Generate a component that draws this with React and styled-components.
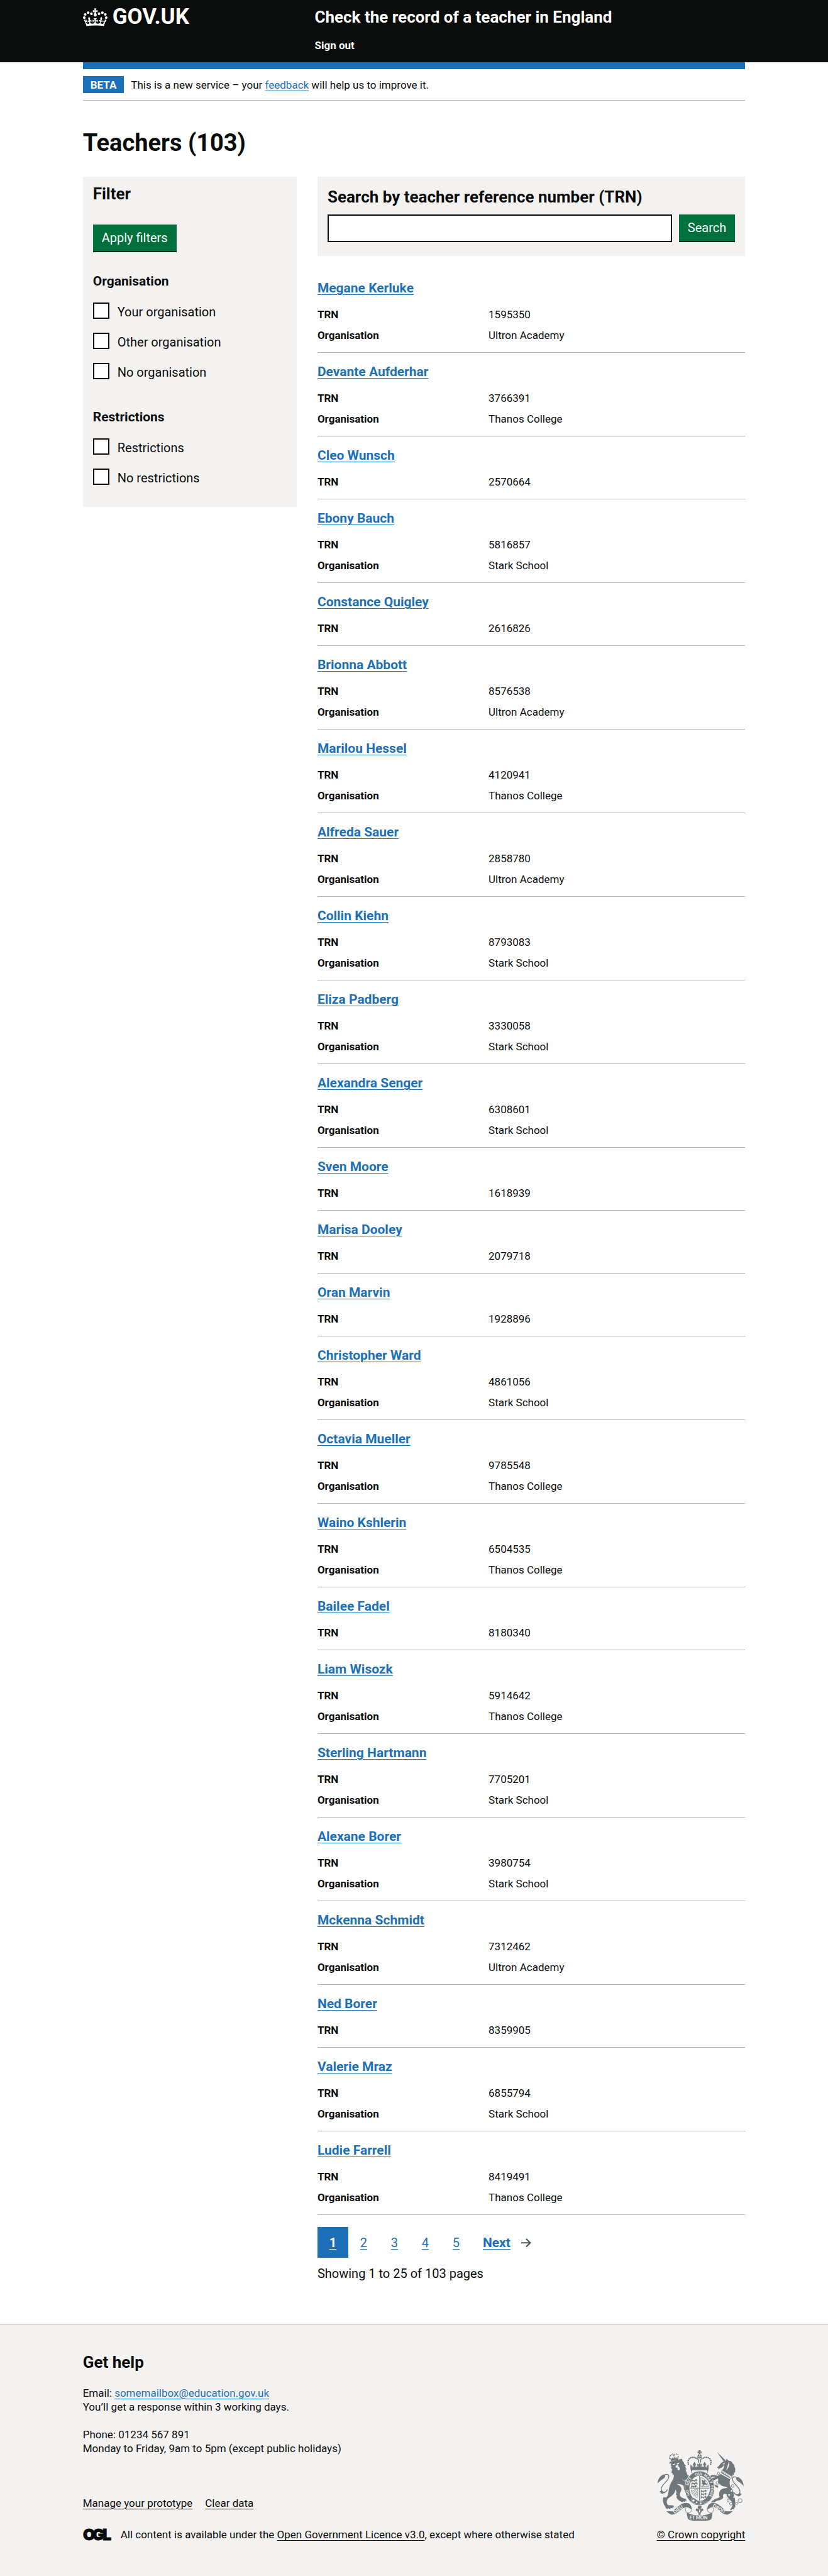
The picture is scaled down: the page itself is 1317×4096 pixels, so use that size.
import React from "react";
import styled, { createGlobalStyle, css } from "styled-components";

const c = {
  ink: "#0b0c0c",
  blue: "#1d70b8",
  green: "#00703c",
  greenDark: "#002d18",
  grey: "#f3f2f1",
  line: "#b1b4b6",
  muted: "#505a5f",
  crest: "#6f777b",
  white: "#ffffff",
};

const text = {
  xl: css`font-size: 38px; line-height: 44px;`,
  l: css`font-size: 26px; line-height: 32px;`,
  m: css`font-size: 21px; line-height: 28px;`,
  body: css`font-size: 20px; line-height: 28px;`,
  s: css`font-size: 17px; line-height: 22px;`,
};

const GlobalStyle = createGlobalStyle`
  *, *::before, *::after { box-sizing: border-box; }
  body {
    margin: 0;
    background: ${c.white};
    color: ${c.ink};
    font-family: Roboto, "Liberation Sans", sans-serif;
  }
  h1, h2, h3, p, ul, dl, dd, fieldset { margin: 0; padding: 0; }
  ul { list-style: none; }
  button, input { font: inherit; }
`;

const Container = styled.div`
  width: 80%;
  max-width: 1054px;
  margin: 0 auto;
`;

const Link = styled.a`
  color: ${(p) => (p.$ink ? c.ink : c.blue)};
  text-decoration: underline;
  text-decoration-thickness: 1px;
  text-underline-offset: 3px;
`;

/* Header */

const Header = styled.header`
  background: ${c.ink};
  color: ${c.white};
`;

const HeaderInner = styled(Container)`
  display: grid;
  grid-template-columns: 35% 1fr;
  padding: 11px 0 16px;
`;

const Logo = styled.a`
  display: flex;
  align-items: center;
  gap: 8px;
  height: 32px;
  color: inherit;
  text-decoration: none;
  font-size: 35px;
  line-height: 32px;
  font-weight: 700;
`;

const ServiceName = styled.a`
  display: block;
  margin-bottom: 18px;
  color: inherit;
  text-decoration: none;
  font-weight: 700;
  ${text.l}
`;

const HeaderLink = styled.a`
  display: inline-block;
  color: inherit;
  text-decoration: none;
  font-weight: 700;
  ${text.s}
`;

const HeaderNav = styled.nav`
  display: flex;
`;

/* Phase banner */

const PhaseBanner = styled.div`
  display: flex;
  align-items: center;
  gap: 11px;
  padding: 11px 0;
  border-top: 11px solid ${c.blue};
  border-bottom: 1px solid ${c.line};
  ${text.s}
`;

const Tag = styled.strong`
  padding: 3px 12px 2px;
  background: ${c.blue};
  color: ${c.white};
  text-transform: uppercase;
`;

/* Page */

const Main = styled.main`
  padding: 45px 0 66px;
`;

const PageTitle = styled.h1`
  margin-bottom: 32px;
  ${text.xl}
`;

const Columns = styled.div`
  display: grid;
  grid-template-columns: 1fr 2fr;
  gap: 33px;
  align-items: start;
`;

const Button = styled.button`
  height: 42px;
  padding: 0 14px;
  border: 0;
  background: ${c.green};
  box-shadow: 0 2px 0 ${c.greenDark};
  color: ${c.white};
  cursor: pointer;
  ${text.body}
`;

/* Filter panel */

const FilterPanel = styled.form`
  padding: 11px 16px 31px;
  background: ${c.grey};
`;

const FilterTitle = styled.h2`
  margin-bottom: 33px;
  ${text.l}
`;

const Fieldset = styled.fieldset`
  min-width: 0;
  margin-top: ${(p) => (p.$first ? "34px" : "42px")};
  border: 0;
`;

const Legend = styled.legend`
  margin-bottom: 20px;
  padding: 0;
  font-weight: 700;
  ${text.m}
`;

const Options = styled.div`
  display: grid;
  gap: 18px;
`;

const Option = styled.div`
  display: flex;
  gap: 13px;
`;

const Checkbox = styled.input`
  appearance: none;
  flex: none;
  width: 26px;
  height: 26px;
  margin: 0;
  border: 2px solid ${c.ink};
  background: ${c.white};
  &:checked { box-shadow: inset 0 0 0 4px ${c.white}; background: ${c.ink}; }
`;

const OptionLabel = styled.label`
  font-size: 20px;
  line-height: 30px;
`;

/* Search panel */

const SearchPanel = styled.form`
  margin-bottom: 21px;
  padding: 16px 16px 22px;
  background: ${c.grey};
`;

const SearchLabel = styled.label`
  display: block;
  margin-bottom: 12px;
  font-weight: 700;
  ${text.l}
`;

const SearchRow = styled.div`
  display: flex;
  gap: 11px;
`;

const SearchInput = styled.input`
  flex: 1;
  min-width: 0;
  height: 44px;
  padding: 0 6px;
  border: 2px solid ${c.ink};
  border-radius: 0;
  background: ${c.white};
  ${text.body}
`;

/* Records */

const Record = styled.li`
  padding: 16px 0;
  border-bottom: 1px solid ${c.line};
`;

const RecordName = styled.h2`
  margin-bottom: 17px;
  ${text.m}
`;

const Summary = styled.dl`
  display: grid;
  gap: 11px;
  ${text.s}
`;

const SummaryRow = styled.div`
  display: grid;
  grid-template-columns: 2fr 3fr;
  dt { font-weight: 700; }
`;

/* Pagination */

const Pagination = styled.nav`
  display: flex;
  align-items: center;
  margin: 19px 0 11px;
`;

const PageList = styled.ul`
  display: flex;
`;

const PageLink = styled(Link)`
  display: flex;
  align-items: center;
  justify-content: center;
  width: 49px;
  height: 49px;
  ${text.body}
  ${(p) => p.$current && css`
    background: ${c.blue};
    color: ${c.white};
    font-weight: 700;
  `}
`;

const NextLink = styled.a`
  display: flex;
  align-items: center;
  gap: 17px;
  margin-left: 18px;
  color: ${c.blue};
  font-weight: 700;
  text-decoration: none;
  ${text.m}
  span {
    text-decoration: underline;
    text-decoration-thickness: 1px;
    text-underline-offset: 3px;
  }
`;

const ResultCount = styled.p`
  ${text.body}
`;

/* Footer */

const Footer = styled.footer`
  border-top: 1px solid ${c.line};
  background: ${c.grey};
  ${text.s}
`;

const FooterInner = styled(Container)`
  display: flex;
  align-items: flex-end;
  justify-content: space-between;
  gap: 33px;
  padding: 44px 0 55px;
`;

const FooterTitle = styled.h2`
  margin-bottom: 22px;
  ${text.l}
`;

const Contact = styled.p`
  margin-bottom: ${(p) => (p.$last ? "65px" : "22px")};
`;

const FooterLinks = styled.ul`
  display: flex;
  gap: 20px;
  margin-bottom: 28px;
`;

const Licence = styled.div`
  display: flex;
  align-items: center;
  gap: 14px;
`;

const Ogl = styled.svg`
  flex: none;
  margin: -5px 0;
  overflow: visible;
`;

const Copyright = styled.a`
  display: flex;
  flex: none;
  flex-direction: column;
  align-items: center;
  gap: 11px;
  color: ${c.ink};
  text-decoration: underline;
  text-decoration-thickness: 1px;
  text-underline-offset: 3px;
`;

function Crown() {
  return (
    <svg width="39" height="29" viewBox="0 0 132 97" fill="currentColor" aria-hidden="true">
      <path d="M25 30.2c3.5 1.5 7.7-.2 9.1-3.7 1.5-3.6-.2-7.8-3.9-9.2-3.6-1.4-7.6.3-9.1 3.9-1.4 3.5.3 7.5 3.9 9zM9 39.5c3.6 1.5 7.8-.2 9.2-3.7 1.5-3.6-.2-7.8-3.9-9.1-3.6-1.5-7.6.2-9.1 3.8-1.4 3.5.3 7.5 3.8 9zM4.4 57.2c3.5 1.5 7.7-.2 9.1-3.8 1.5-3.6-.2-7.7-3.9-9.1-3.5-1.5-7.6.3-9.1 3.8-1.4 3.5.3 7.6 3.9 9.1zm38.3-21.4c3.5 1.5 7.7-.2 9.1-3.8 1.5-3.6-.2-7.7-3.9-9.1-3.6-1.5-7.6.3-9.1 3.8-1.3 3.6.4 7.7 3.9 9.1zm64.4-5.6c-3.6 1.5-7.8-.2-9.1-3.7-1.5-3.6.2-7.8 3.8-9.2 3.6-1.4 7.7.3 9.2 3.9 1.3 3.5-.4 7.5-3.9 9zm15.9 9.3c-3.6 1.5-7.7-.2-9.1-3.7-1.5-3.6.2-7.8 3.7-9.1 3.6-1.5 7.7.2 9.2 3.8 1.5 3.5-.3 7.5-3.8 9zm4.7 17.7c-3.6 1.5-7.8-.2-9.2-3.8-1.5-3.6.2-7.7 3.9-9.1 3.6-1.5 7.7.3 9.2 3.8 1.3 3.5-.4 7.6-3.9 9.1zM89.3 35.8c-3.6 1.5-7.8-.2-9.2-3.8-1.4-3.6.2-7.7 3.9-9.1 3.6-1.5 7.7.3 9.2 3.8 1.4 3.6-.3 7.7-3.9 9.1zM69.7 17.7l8.9 4.7V9.3l-8.9 2.8c-.2-.3-.5-.6-.9-.9L72.4 0H59.6l3.5 11.2c-.3.3-.6.5-.9.9l-8.8-2.8v13.1l8.8-4.7c.3.3.6.7.9.9l-5 15.4v.1c-.2.8-.4 1.6-.4 2.4 0 4.1 3.1 7.5 7 8.1h.2c.3 0 .7.1 1 .1.4 0 .7 0 1-.1h.2c4-.6 7.1-4.1 7.1-8.1 0-.8-.1-1.7-.4-2.4V34l-5.1-15.4c.4-.2.7-.6 1-.9zM66 92.8c16.9 0 32.8 1.1 47.1 3.2 4-16.9 8.9-26.7 14-33.5l-9.6-3.4c1 4.9 1.1 7.2 0 10.2-1.5-1.4-3-4.3-4.2-8.7L108.6 76c2.8-2 5-3.2 7.5-3.3-4.4 9.4-10 11.9-13.6 11.2-4.3-.8-6.3-4.6-5.6-7.9 1-4.7 5.7-5.9 8-.5 4.3-8.7-3-11.4-7.6-8.8 7.1-7.2 7.9-13.5 2.1-21.1-8 6.1-8.1 12.3-4.5 20.8-4.7-5.4-12.1-2.5-9.5 6.2 3.4-5.2 7.9-2 7.2 3.1-.6 4.3-6.4 7.8-13.5 7.2-10.3-.9-10.9-8-11.2-13.8 2.5-.5 7.1 1.8 11 7.3L80.2 60c-4.1 4.4-8 5.3-12.3 5.4 1.4-4.4 8-11.6 8-11.6H55.5s6.4 7.2 7.9 11.6c-4.2-.1-8-1-12.3-5.4l1.4 16.4c3.9-5.5 8.5-7.7 10.9-7.3-.3 5.8-.9 12.8-11.1 13.8-7.2.6-12.9-2.9-13.5-7.2-.7-5 3.8-8.3 7.1-3.1 2.7-8.7-4.6-11.6-9.4-6.2 3.7-8.5 3.6-14.7-4.6-20.8-5.8 7.6-5 13.9 2.2 21.1-4.7-2.6-11.9.1-7.7 8.8 2.3-5.5 7.1-4.2 8.1.5.7 3.3-1.3 7.1-5.7 7.9-3.5.7-9-1.8-13.5-11.2 2.5.1 4.7 1.3 7.5 3.3l-4.7-15.4c-1.2 4.4-2.7 7.2-4.3 8.7-1.1-3-.9-5.3 0-10.2l-9.5 3.4c5 6.9 9.9 16.7 14 33.5 14.8-2.1 30.8-3.2 47.7-3.2z" />
    </svg>
  );
}

function OglMark() {
  return (
    <Ogl width="46" height="32" viewBox="0 0 46 32" role="img" aria-label="Open Government Licence">
      <g fill={c.ink} stroke={c.ink} strokeWidth="1" fontFamily="Inter, Roboto, sans-serif" fontWeight="900" fontSize="25">
        <text x="0" y="25">O</text>
        <text x="15" y="25">G</text>
        <text x="31" y="25">L</text>
      </g>
    </Ogl>
  );
}

function ArrowRight() {
  return (
    <svg width="16" height="14" viewBox="0 0 15 13" fill={c.muted} aria-hidden="true">
      <path d="m8.107-.0078-1.4136 1.414 4.2926 4.293H0v2h10.9864l-4.2926 4.293 1.4136 1.414 6.7072-6.707z" />
    </svg>
  );
}

const archBeads = [
  [340, 150], [337, 134], [339, 118], [347, 104], [360, 95], [375, 91], [390, 92], [404, 98], [417, 104],
];

const mirror = (x) => 874 - x;

function HalfCrown() {
  return (
    <g>
      {archBeads.map(([x, y]) => <circle key={`${x}-${y}`} cx={x} cy={y} r="6.5" />)}
      <path d="M354 160l12 22 8-18 3 18 8-10-2-14-6 2 4-10 12-20 11 20 5 9-8-1-2 14 9 10 6-16 8 18 4-18 12 2v42h-76z" />
      <path d="M366 180l-12-28 20 16zM424 108h9v30h-9z" />
    </g>
  );
}

function HalfRibbon() {
  return (
    <g>
      <path d="M148 560l54 2c40-30 70-74 120-74 34 0 50 36 48 60-18-14-28-24-50-22-50 6-72 66-126 64-20-4-30-18-46-30z" />
      <path d="M318 534c-10 16-2 30 14 38M370 548c-4 16-16 26-34 26" fill="none" stroke={c.crest} strokeWidth="5" />
    </g>
  );
}

function SupporterTail() {
  return (
    <g>
      <path d="M158 372c-20 36-56 30-54-8 4-40 66-66 66-106 0-22-26-24-46-10" fill="none" stroke={c.crest} strokeWidth="7" />
      <path d="M72 320c2-30 12-60 44-76 14-6 26 4 22 14-8 20-24 22-34 32-12 10-20 16-32 30zM90 384c10 6 14-2 16-12 4 14 14 20 30 22l-6 12-10-3-2 10-10-8-8 4 1-10c-6-2-10-8-11-15z" />
    </g>
  );
}

function LionPassant({ x, y }) {
  return (
    <path
      transform={`translate(${x} ${y})`}
      d="M0 6l8-6 6 6h18l8-8 8 2-4 4 12 2-4 6-8-2 2 9-8-1-2-6-10 2 6 7-9 1-5-8-8 2-6 6-6-3 6-7z"
    />
  );
}

function RoyalArms() {
  return (
    <svg width="137" height="112" viewBox="72 30 750 612" fill={c.crest} aria-hidden="true">
      <defs>
        <path id="garter" d="M438 479A98 117 0 0 1 438 245A98 117 0 0 1 438 479" />
      </defs>

      {/* Imperial crown */}
      <path d="M428 30h19l-4 12 11-5v19l-11-4 4 12h-19l4-12-12 4V37l12 5z" />
      <path d="M420 80c0-10 6-16 15-17v17zM440 63c9 1 15 7 15 17h-15zM416 84h42c0 12-9 18-21 18s-21-6-21-18z" />
      <path d="M418 146l14 8 0-12h11l0 12 14-8v24l-14-8 2 12h-17l2-12-12 8z" />
      <HalfCrown />
      <g transform="translate(874 0) scale(-1 1)"><HalfCrown /></g>
      <path d="M358 182c50-12 108-12 158 0l-8 24c-46-10-96-10-142 0z" />
      <path d="M372 202h130l8 14c-2 6-6 10-10 14H374c-4-4-8-8-10-14z" fill={c.grey} stroke={c.crest} strokeWidth="5" />

      {/* Lion */}
      <path d="M172 146l8-16 104-26 4 18 16 18-4 4 20 22-10 2 14 30-10 0 14 36 6 16 12-4-14 26-6 10c-8 8-14 10-22 8l28 28c16 18 14 34 20 66 4 14-2 16-8 4l-4 4-8-10-6 6-8-16-12 8c-10-12-2-30-10-42-12-10-30-16-58-14 26 12 42 24 42 46-4 24-22 38-12 58 14 20 34 20 50 26l8 20-10-6-6 14-10-8-10 8c-22-8-42-18-54-42l4-16-10-8c8-12 8-26-2-44-12 60-62 62-74 92-6 22 0 40 16 44h28c16 2 18 12 14 20l-10-4 2 12-18-4-4 10-18-8-8 8-14-10-4-14c-16-20-24-52-16-80l26 4c26-28 16-86 38-124 16-28 28-40 28-78l-10 8-4-22-8 2 8-40-12 6 6-30-8 2 4-22z" />
      <path d="M202 152l22-6 0 8-14 5zM238 144l24-6-6 12-14 4zM226 172l10-12 18-4-4 12 14 14 0 18-10 6-10-10 2-14-14 0z" fill={c.grey} />
      <path d="M284 280l56 50" stroke={c.grey} strokeWidth="3" />
      <g>
        <path d="M190 124l-12-32 16 14 6-14 8 14 8-20 8 18 10-14 6 14 12-16-2 26z" />
        {[[178, 88], [182, 76], [192, 70], [204, 62], [214, 78], [220, 66], [236, 62], [248, 68], [252, 82], [176, 102], [250, 94], [208, 70]].map(([x, y]) => (
          <circle key={`${x}-${y}`} cx={x} cy={y} r="5" />
        ))}
      </g>
      <SupporterTail />

      {/* Unicorn */}
      <path d="M588 45l76 72-14 14z" />
      <path d="M602 170c14-14 20-34 50-46l16-4 2-17 20 18c20 0 32 10 34 24l18 14-2 10 8 22-2 34-8-4-4 28-10-6-2 16-88-56c14-16 22-26 16-46-6 16-22 30-38 30l-8 14-2-14-12-6 8-6-12-2z" />
      <path d="M640 148l16-6-4 10zM692 132c6 22-2 50-24 72" fill={c.grey} stroke={c.grey} strokeWidth="3" />
      <path d="M632 204l88 56-10 16-86-50z" fill={c.grey} stroke={c.crest} strokeWidth="4" />
      <path d="M630 226l4-14 8 14 8-6 4 18 10-8 4 16 10-6 6 16 8-8 4 16 8-4-2 10z" />
      <path d="M620 236l84 46c-8 30-8 54 16 84 20 30 12 64 26 86l2 70c-8 6-10 14-8 20l-22 0-4 10-10-2c4-18 22-26 20-54-2-30-48-46-52-84-22-8-38 4-28 26-6 26-40 24-62 34l-12 10-34 2 14-16 8-2 10-10 44-16c-10-38-2-66 30-76 22-4 44-6 34-14-16-4-44-2-64-26-14-16-16-34-12-46-24-14-44-24-56-14l-6 8-8-16c14-20 36-12 64-2z" />
      <path d="M604 272l-46 22 4 32 38 14-4 16-18-6-20-30-22-24 6-24 60-12z" />
      <g transform="translate(893 22) scale(-1 1)"><SupporterTail /></g>

      {/* Chain */}
      <g fill="none" stroke={c.crest} strokeWidth="5">
        <ellipse cx="602" cy="231" rx="9" ry="12" />
        <ellipse cx="584" cy="258" rx="7" ry="11" />
        <ellipse cx="591" cy="314" rx="10" ry="13" />
        <circle cx="726" cy="340" r="12" />
        <ellipse cx="685" cy="467" rx="9" ry="13" />
        <circle cx="710" cy="495" r="12" />
        <ellipse cx="760" cy="492" rx="12" ry="9" />
        <circle cx="790" cy="469" r="18" />
      </g>
      <g fill={c.grey}>
        <circle cx="716" cy="384" r="8" />
        <circle cx="695" cy="419" r="8" />
        <circle cx="738" cy="438" r="7" />
      </g>

      {/* Garter and shield */}
      <ellipse cx="438" cy="361" rx="130" ry="151" fill={c.grey} />
      <ellipse cx="438" cy="361" rx="108" ry="129" fill={c.grey} stroke={c.crest} strokeWidth="37" />
      <g fill={c.grey} fontFamily="Lato, Roboto, sans-serif" fontWeight="900" fontSize="31">
        <text><textPath href="#garter" startOffset="108">HO</textPath></text>
        <text><textPath href="#garter" startOffset="192">SOIT</textPath></text>
        <text><textPath href="#garter" startOffset="300">QUI</textPath></text>
        <text><textPath href="#garter" startOffset="374">MAL</textPath></text>
        <text><textPath href="#garter" startOffset="446">Y</textPath></text>
        <text><textPath href="#garter" startOffset="482">PENSE</textPath></text>
      </g>
      <path d="M434 254h6v216h-6zM352 356h172v6H352z" />
      <LionPassant x={366} y={282} />
      <LionPassant x={366} y={308} />
      <LionPassant x={362} y={334} />
      <LionPassant x={447} y={376} />
      <LionPassant x={447} y={402} />
      <LionPassant x={447} y={428} />
      <path d="M448 268c34 6 60 34 66 78h-66z" fill="none" stroke={c.crest} strokeWidth="4" />
      <path d="M456 290l10-6 4 12 16-8 4 12-8 8 20 14-2 16-14-12-12 12-14 4 8-14-12-8 6-8z" />
      <path d="M364 376c26 10 40-14 58-6v64c-6 12-20 6-24-2-20-16-30-32-34-56zM376 386l30 44M388 382l24 40M402 376l14 32" fill="none" stroke={c.crest} strokeWidth="4" />
      <path d="M366 452c6-12 26-10 34 0 30 26 80 34 116 24-26 22-84 36-130 12l-8 2-12-12 4-10z" stroke={c.grey} strokeWidth="3" />
      <g fill={c.grey}>
        <circle cx="384" cy="468" r="10" />
        <circle cx="412" cy="482" r="7" />
        <circle cx="447" cy="491" r="7" />
      </g>

      {/* Motto */}
      <HalfRibbon />
      <g transform={`translate(${mirror(0)} 0) scale(-1 1)`}><HalfRibbon /></g>
      <path d="M324 570c60 36 166 36 226 0l-6 44c-2 18-14 28-50 28H384c-36 0-48-10-52-28z" />
      <g fill={c.grey} fontFamily="Lato, Roboto, sans-serif" fontWeight="900" fontSize="40">
        <text x="350" y="629">ET MON</text>
        <text transform="translate(218 584) rotate(-35)">DIEU</text>
        <text transform="translate(548 520) rotate(30)">DROIT</text>
      </g>
      <path d="M424 514h30v22l-6-4v14c6-12 20-12 22 2 0 12-10 12-14 8-2 10 0 16-12 20l4 8-8 10h-6l-8-10 4-8c-10-4-10-10-12-20-4 4-14 4-14-8 2-14 16-14 22-2v-14l-6 4z" />
      <path d="M438 540l6 20-6 14-6-14z" fill={c.grey} />
    </svg>
  );
}

const filters = [
  { legend: "Organisation", name: "organisation", options: ["Your organisation", "Other organisation", "No organisation"] },
  { legend: "Restrictions", name: "restrictions", options: ["Restrictions", "No restrictions"] },
];

const teachers = [
  ["Megane Kerluke", "1595350", "Ultron Academy"],
  ["Devante Aufderhar", "3766391", "Thanos College"],
  ["Cleo Wunsch", "2570664"],
  ["Ebony Bauch", "5816857", "Stark School"],
  ["Constance Quigley", "2616826"],
  ["Brionna Abbott", "8576538", "Ultron Academy"],
  ["Marilou Hessel", "4120941", "Thanos College"],
  ["Alfreda Sauer", "2858780", "Ultron Academy"],
  ["Collin Kiehn", "8793083", "Stark School"],
  ["Eliza Padberg", "3330058", "Stark School"],
  ["Alexandra Senger", "6308601", "Stark School"],
  ["Sven Moore", "1618939"],
  ["Marisa Dooley", "2079718"],
  ["Oran Marvin", "1928896"],
  ["Christopher Ward", "4861056", "Stark School"],
  ["Octavia Mueller", "9785548", "Thanos College"],
  ["Waino Kshlerin", "6504535", "Thanos College"],
  ["Bailee Fadel", "8180340"],
  ["Liam Wisozk", "5914642", "Thanos College"],
  ["Sterling Hartmann", "7705201", "Stark School"],
  ["Alexane Borer", "3980754", "Stark School"],
  ["Mckenna Schmidt", "7312462", "Ultron Academy"],
  ["Ned Borer", "8359905"],
  ["Valerie Mraz", "6855794", "Stark School"],
  ["Ludie Farrell", "8419491", "Thanos College"],
];

function FilterGroup({ group, first }) {
  return (
    <Fieldset $first={first}>
      <Legend>{group.legend}</Legend>
      <Options>
        {group.options.map((option, i) => {
          const id = `${group.name}-${i + 1}`;
          return (
            <Option key={id}>
              <Checkbox type="checkbox" id={id} name={group.name} value={option} />
              <OptionLabel htmlFor={id}>{option}</OptionLabel>
            </Option>
          );
        })}
      </Options>
    </Fieldset>
  );
}

function TeacherRecord({ name, trn, organisation }) {
  return (
    <Record>
      <RecordName><Link href={`#${trn}`}>{name}</Link></RecordName>
      <Summary>
        <SummaryRow><dt>TRN</dt><dd>{trn}</dd></SummaryRow>
        {organisation && <SummaryRow><dt>Organisation</dt><dd>{organisation}</dd></SummaryRow>}
      </Summary>
    </Record>
  );
}

export default function App() {
  return (
    <>
      <GlobalStyle />
      <Header>
        <HeaderInner>
          <Logo href="#home"><Crown /><span>GOV.UK</span></Logo>
          <div>
            <ServiceName href="#service">Check the record of a teacher in England</ServiceName>
            <HeaderNav aria-label="Account"><HeaderLink href="#sign-out">Sign out</HeaderLink></HeaderNav>
          </div>
        </HeaderInner>
      </Header>

      <Container>
        <PhaseBanner>
          <Tag>Beta</Tag>
          <span>This is a new service – your <Link href="#feedback">feedback</Link> will help us to improve it.</span>
        </PhaseBanner>

        <Main>
          <PageTitle>Teachers (103)</PageTitle>
          <Columns>
            <FilterPanel onSubmit={(e) => e.preventDefault()}>
              <FilterTitle>Filter</FilterTitle>
              <Button type="submit">Apply filters</Button>
              {filters.map((group, i) => <FilterGroup key={group.name} group={group} first={i === 0} />)}
            </FilterPanel>

            <div>
              <SearchPanel role="search" onSubmit={(e) => e.preventDefault()}>
                <SearchLabel htmlFor="trn">Search by teacher reference number (TRN)</SearchLabel>
                <SearchRow>
                  <SearchInput id="trn" name="trn" type="text" />
                  <Button type="submit">Search</Button>
                </SearchRow>
              </SearchPanel>

              <ul>
                {teachers.map(([name, trn, organisation]) => (
                  <TeacherRecord key={trn} name={name} trn={trn} organisation={organisation} />
                ))}
              </ul>

              <Pagination aria-label="Results">
                <PageList>
                  {[1, 2, 3, 4, 5].map((n) => (
                    <li key={n}>
                      <PageLink href={`#page-${n}`} $current={n === 1} aria-current={n === 1 ? "page" : undefined}>{n}</PageLink>
                    </li>
                  ))}
                </PageList>
                <NextLink href="#page-2"><span>Next</span><ArrowRight /></NextLink>
              </Pagination>
              <ResultCount>Showing 1 to 25 of 103 pages</ResultCount>
            </div>
          </Columns>
        </Main>
      </Container>

      <Footer>
        <FooterInner>
          <div>
            <FooterTitle>Get help</FooterTitle>
            <Contact>
              Email: <Link href="mailto:somemailbox@education.gov.uk">somemailbox@education.gov.uk</Link>
              <br />
              You’ll get a response within 3 working days.
            </Contact>
            <Contact $last>
              Phone: 01234 567 891
              <br />
              Monday to Friday, 9am to 5pm (except public holidays)
            </Contact>
            <FooterLinks>
              <li><Link $ink href="#manage">Manage your prototype</Link></li>
              <li><Link $ink href="#clear">Clear data</Link></li>
            </FooterLinks>
            <Licence>
              <OglMark />
              <span>
                All content is available under the <Link $ink href="#licence">Open Government Licence v3.0</Link>, except where otherwise stated
              </span>
            </Licence>
          </div>
          <Copyright href="#copyright"><RoyalArms />© Crown copyright</Copyright>
        </FooterInner>
      </Footer>
    </>
  );
}
